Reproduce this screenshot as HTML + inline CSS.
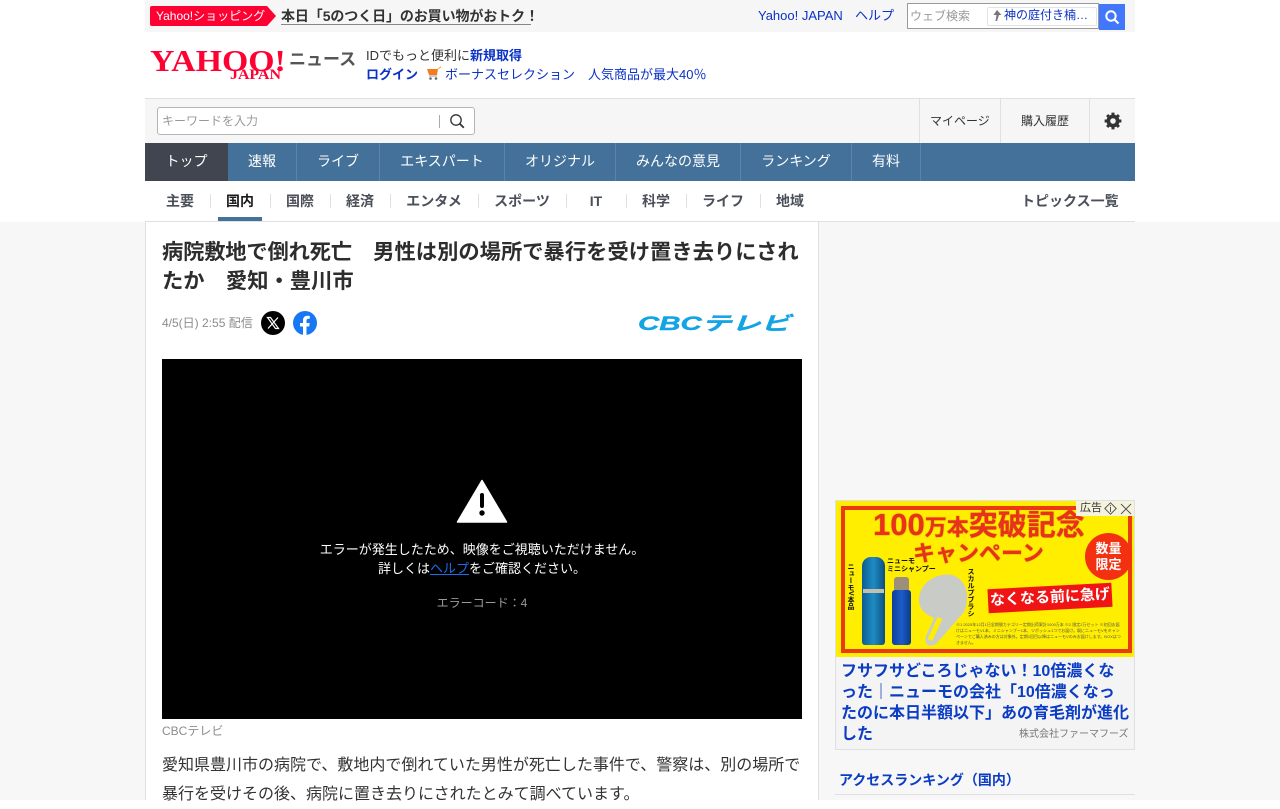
<!DOCTYPE html>
<html lang="ja"><head><meta charset="utf-8"><title>Yahoo!ニュース</title>
<style>
*{box-sizing:border-box}
html,body{margin:0;padding:0;width:1280px;height:800px;overflow:hidden;background:#fff;font-family:"Liberation Sans","Noto Sans CJK JP",sans-serif;color:#333}
.a{position:absolute;white-space:nowrap}
a,.l{color:#0b32c4;text-decoration:none}
.nav{position:absolute;top:143px;height:38px;line-height:37px;color:#fff;font-size:14px;text-align:center;border-right:1px solid #5b84a8;opacity:1}
.sub{position:absolute;top:193px;font-size:14px;font-weight:bold;color:#4a4f59;line-height:16px;text-align:center;width:60px}
.sep{position:absolute;top:194px;width:1px;height:14px;background:#e0e0e0}
</style></head><body>
<div class="a" style="left:0;top:222px;width:1280px;height:578px;background:#f7f7f7"></div>

<!-- top bar -->
<div class="a" style="left:145px;top:0;width:990px;height:32px;background:#f6f6f6"></div>
<svg class="a" style="left:150px;top:6px" width="127" height="20"><path d="M2 0H117L126 10L117 20H2Q0 20 0 18V2Q0 0 2 0Z" fill="#ff0033"/></svg>
<div class="a" style="left:156px;top:6px;height:20px;line-height:20px;font-size:12px;color:#fff">Yahoo!ショッピング</div>
<div class="a" style="left:281px;top:6px;height:19px;line-height:20px;font-size:14px;font-weight:bold;color:#333;border-bottom:1px solid #888;width:250px;letter-spacing:-.1px">本日「5のつく日」のお買い物がおトク！</div>
<div class="a l" style="left:758px;top:8px;font-size:13px;line-height:15px">Yahoo! JAPAN</div>
<div class="a l" style="left:855px;top:8px;font-size:13px;line-height:15px">ヘルプ</div>
<div class="a" style="left:907px;top:3px;width:192px;height:26px;background:#fff;border:1px solid #999"></div>
<div class="a" style="left:910px;top:9px;font-size:12px;line-height:14px;color:#999">ウェブ検索</div>
<div class="a" style="left:987px;top:7px;width:110px;height:19px;border:1px solid #e4e4e4;border-radius:2px;background:#fff"></div>
<svg class="a" style="left:992px;top:10px" width="10" height="12"><path d="M5 0L9.500 5H7L5 11H3.500L4.500 5H1.500Z" fill="#777"/></svg>
<div class="a l" style="left:1004px;top:8px;font-size:12px;line-height:15px">神の庭付き楠…</div>
<div class="a" style="left:1099px;top:4px;width:26px;height:26px;background:#4277fb"></div>
<svg class="a" style="left:1104px;top:9px" width="16" height="16" fill="none" stroke="#fff" stroke-width="2"><circle cx="7" cy="7" r="4.700"/><path d="M10.500 10.500L14.500 14.500"/></svg>

<!-- logo -->
<div class="a" style="left:150px;top:45px;font-family:'Liberation Serif',serif;font-weight:bold;font-size:31px;line-height:31px;color:#ff0033;transform-origin:0 0;transform:scaleX(1.09)">YAHOO!</div>
<div class="a" style="left:230px;top:68px;font-family:'Liberation Serif',serif;font-weight:bold;font-size:15px;line-height:15px;color:#ff0033;transform-origin:0 0;transform:scaleX(1.06)">JAPAN</div>
<div class="a" style="left:289px;top:49px;font-size:17px;font-weight:bold;line-height:22px;color:#555">ニュース</div>
<div class="a" style="left:366px;top:47px;font-size:13px;line-height:18px;color:#333">IDでもっと便利に<a style="font-weight:bold">新規取得</a></div>
<div class="a l" style="left:366px;top:66px;font-size:13px;line-height:18px;font-weight:bold">ログイン</div>
<svg class="a" style="left:426px;top:66px" width="17" height="15"><path d="M1 3H12L11 9H3Z" fill="#f47c20"/><path d="M3 10H11" stroke="#999" stroke-width="1"/><circle cx="4.500" cy="12.500" r="1.300" fill="#666"/><circle cx="10" cy="12.500" r="1.300" fill="#666"/><path d="M12 3L15 .8" stroke="#f5a623" stroke-width="1"/></svg>
<div class="a l" style="left:445px;top:66px;font-size:13px;line-height:18px">ボーナスセレクション</div>
<div class="a l" style="left:588px;top:66px;font-size:13px;line-height:18px">人気商品が最大40％</div>

<!-- search row -->
<div class="a" style="left:145px;top:98px;width:990px;height:45px;background:#f6f6f6;border-top:1px solid #e0e0e0"></div>
<div class="a" style="left:157px;top:107px;width:318px;height:28px;background:#fff;border:1px solid #b5b5b5;border-radius:3px"></div>
<div class="a" style="left:162px;top:113px;font-size:12px;line-height:16px;color:#999">キーワードを入力</div>
<div class="a" style="left:439px;top:115px;width:1px;height:13px;background:#aaa"></div>
<svg class="a" style="left:449px;top:113px" width="16" height="16" fill="none" stroke="#333" stroke-width="1.300"><circle cx="7" cy="7" r="5.200"/><path d="M10.800 10.800L14.800 14.800" stroke-width="1.800"/></svg>
<div class="a" style="left:919px;top:99px;width:1px;height:44px;background:#e0e0e0"></div>
<div class="a" style="left:1000px;top:99px;width:1px;height:44px;background:#e0e0e0"></div>
<div class="a" style="left:1089px;top:99px;width:1px;height:44px;background:#e0e0e0"></div>
<div class="a" style="left:930px;top:113px;font-size:12px;line-height:16px;color:#333">マイページ</div>
<div class="a" style="left:1021px;top:113px;font-size:12px;line-height:16px;color:#333">購入履歴</div>
<svg class="a" style="left:1104px;top:112px" width="18" height="18"><circle cx="9" cy="9" r="6.500" fill="#333"/><path d="M9 .6V17.400M.6 9H17.400M3.100 3.100L14.900 14.900M14.900 3.100L3.100 14.900" stroke="#333" stroke-width="3"/><circle cx="9" cy="9" r="2.800" fill="#f6f6f6"/></svg>

<!-- nav -->
<div class="a" style="left:145px;top:143px;width:990px;height:38px;background:#437199"></div>
<div class="nav" style="left:145px;width:83px;background:#40454f;border-right:0">トップ</div>
<div class="nav" style="left:228px;width:69px">速報</div>
<div class="nav" style="left:297px;width:83px">ライブ</div>
<div class="nav" style="left:380px;width:125px">エキスパート</div>
<div class="nav" style="left:505px;width:111px">オリジナル</div>
<div class="nav" style="left:616px;width:125px">みんなの意見</div>
<div class="nav" style="left:741px;width:111px">ランキング</div>
<div class="nav" style="left:852px;width:69px">有料</div>

<!-- sub nav -->
<div class="a" style="left:145px;top:221px;width:990px;height:1px;background:#e0e0e0"></div>
<div class="sub" style="left:150px">主要</div>
<div class="sub" style="left:210px;color:#1a1a1a">国内</div>
<div class="a" style="left:218px;top:217px;width:44px;height:4px;background:#437199"></div>
<div class="sub" style="left:270px">国際</div>
<div class="sub" style="left:330px">経済</div>
<div class="sub" style="left:390px;width:88px">エンタメ</div>
<div class="sub" style="left:478px;width:88px">スポーツ</div>
<div class="sub" style="left:566px">IT</div>
<div class="sub" style="left:626px">科学</div>
<div class="sub" style="left:686px;width:74px">ライフ</div>
<div class="sub" style="left:760px">地域</div>
<div class="sep" style="left:210px"></div><div class="sep" style="left:270px"></div><div class="sep" style="left:330px"></div><div class="sep" style="left:390px"></div><div class="sep" style="left:478px"></div><div class="sep" style="left:566px"></div><div class="sep" style="left:626px"></div><div class="sep" style="left:686px"></div><div class="sep" style="left:760px"></div>
<div class="a" style="left:1021px;top:193px;font-size:14px;font-weight:bold;line-height:16px;color:#4a4f59">トピックス一覧</div>

<!-- article -->
<div class="a" style="left:145px;top:222px;width:674px;height:578px;background:#fff;border-left:1px solid #e0e0e0;border-right:1px solid #e0e0e0"></div>
<div class="a" style="left:162px;top:238px;width:640px;white-space:normal;font-size:21.300px;line-height:29px;font-weight:bold;color:#2d2d2d"><span style="letter-spacing:-.2px">病院敷地で倒れ死亡</span>　男性は別の場所で暴行を受け置き去りにされたか　愛知・豊川市</div>
<div class="a" style="left:162px;top:315px;font-size:12px;line-height:16px;color:#8c8c8c">4/5(日) 2:55 配信</div>
<svg class="a" style="left:261px;top:311px" width="24" height="24"><circle cx="12" cy="12" r="12" fill="#000"/><path d="M6.500 6.500H9.500L17.500 17.500H14.500ZM17 6.500L7 17.500" fill="none" stroke="#fff" stroke-width="1.200"/></svg>
<svg class="a" style="left:293px;top:311px" width="24" height="24"><circle cx="12" cy="12" r="12" fill="#1877f2"/><path d="M10 24V15.500H7V12H10V9.300C10 6.300 11.800 4.700 14.500 4.700C15.800 4.700 16.800 4.900 16.800 4.900V7.800H15.300C13.900 7.800 13.500 8.700 13.500 9.600V12H16.700L16.200 15.500H13.500V24Z" fill="#fff"/></svg>
<div class="a" style="left:638px;top:314px;font-style:italic;font-weight:bold;font-size:19px;line-height:21px;color:#12a4e4;-webkit-text-stroke:.4px #12a4e4;transform-origin:0 0;transform:scaleX(1.55)">CBCテレビ</div>

<div class="a" style="left:162px;top:359px;width:640px;height:360px;background:#000"></div>
<svg class="a" style="left:456px;top:479px" width="52" height="44"><path d="M26 1.500L50.500 43H1.500Z" fill="#fff" stroke="#fff" stroke-linejoin="round" stroke-width="1.500"/><rect x="24" y="14" width="4" height="15" rx="2" fill="#000"/><circle cx="26" cy="34" r="2.700" fill="#000"/></svg>
<div class="a" style="left:162px;top:540px;width:640px;text-align:center;font-size:13px;line-height:19px;color:#fff">エラーが発生したため、映像をご視聴いただけません。<br>詳しくは<span style="color:#1a6ee8;text-decoration:underline">ヘルプ</span>をご確認ください。</div>
<div class="a" style="left:162px;top:595px;width:640px;text-align:center;font-size:12px;line-height:16px;color:#999">エラーコード：4</div>
<div class="a" style="left:162px;top:723px;font-size:12px;line-height:16px;color:#8c8c8c">CBCテレビ</div>
<div class="a" style="left:162px;top:751px;width:642px;white-space:normal;font-size:16px;line-height:29px;color:#333">愛知県豊川市の病院で、敷地内で倒れていた男性が死亡した事件で、警察は、別の場所で暴行を受けその後、病院に置き去りにされたとみて調べています。</div>

<!-- ad -->
<div class="a" style="left:835px;top:500px;width:300px;height:250px;background:#f4f4f4;border:1px solid #e0e0e0"></div>
<div class="a" style="left:836px;top:501px;width:298px;height:156px;background:#ffee00;overflow:hidden">
<div class="a" style="left:5px;top:5px;width:291px;height:147px;border:4px solid #ea3a12"></div>
<div class="a" style="left:37px;top:8px;font-size:31px;line-height:32px;font-weight:bold;color:#e8321a;text-shadow:0 0 1px #c22">100<span style="font-size:22px">万本</span><span style="font-size:29px">突破記念</span></div>
<div class="a" style="left:77px;top:40px;font-size:22px;line-height:26px;font-weight:bold;color:#e8321a;text-shadow:0 0 1px #c22">キャンペーン</div>
<div class="a" style="left:26px;top:56px;width:23px;height:88px;border-radius:9px 9px 3px 3px;background:linear-gradient(90deg,#0d5c8f,#1e8cc4 50%,#0d4f7e)"></div>
<div class="a" style="left:27px;top:88px;width:21px;height:4px;background:#c4c0b0"></div>
<div class="a" style="left:58px;top:76px;width:15px;height:15px;background:#9b8f7c;border-radius:3px"></div>
<div class="a" style="left:56px;top:89px;width:19px;height:55px;border-radius:3px;background:linear-gradient(90deg,#0d3f9a,#1c5cc8 50%,#0c3a8a)"></div>
<svg class="a" style="left:80px;top:71px" width="54" height="76"><path d="M3 28C3 10 22 0 36 3C52 8 54 26 48 40L20 72C12 76 8 72 10 64L18 46C8 42 3 36 3 28Z" fill="#c9cbc7"/><path d="M24 46L14 68" stroke="#ffee00" stroke-width="5"/></svg>
<div class="a" style="left:152px;top:85px;width:124px;height:24px;background:#f01414;transform:rotate(-3deg);color:#fff;font-size:15px;font-weight:bold;line-height:24px;text-align:center">なくなる前に急げ</div>
<div class="a" style="left:249px;top:32px;width:47px;height:47px;border-radius:50%;background:#f3300f;color:#fff;font-size:13px;font-weight:bold;line-height:16px;text-align:center;padding-top:8px">数量<br>限定</div>
<div class="a" style="left:10px;top:62px;font-size:7px;line-height:8px;font-weight:bold;color:#111;writing-mode:vertical-rl">ニューモV本品</div>
<div class="a" style="left:51px;top:57px;font-size:7px;line-height:8px;font-weight:bold;color:#111">ニューモ<br>ミニシャンプー</div>
<div class="a" style="left:130px;top:67px;font-size:7px;line-height:8px;font-weight:bold;color:#111;writing-mode:vertical-rl">スカルプブラシ</div>
<div class="a" style="left:120px;top:121px;width:167px;white-space:normal;font-size:4px;line-height:6px;color:#555">※1 2025年12月1日全期間カテゴリー定期出荷累計1000万本 ※2 限定2万セット ※初回お届けはニューモV1本、ミニシャンプー1本、ツボッシュ1つでお届け。既にニューモVをキャンペーンでご購入済みの方は対象外。定期2回目以降はニューモVのみお届けします。BOXはつきません。</div>
</div>
<div class="a" style="left:1076px;top:501px;width:58px;height:15px;background:#f6f3dd;font-size:11px;line-height:15px;color:#333;padding-left:4px">広告</div>
<svg class="a" style="left:1104px;top:502px" width="29" height="13" fill="none" stroke="#555"><path d="M6.500 .8L12.200 6.500L6.500 12.200L.8 6.500Z"/><path d="M6.500 5V10M6.500 3V4.200"/><path d="M17 2L27 12M27 2L17 12"/></svg>
<div class="a" style="left:841px;top:661px;width:289px;white-space:normal;font-size:16px;line-height:21px;font-weight:bold;color:#0b3cc4">フサフサどころじゃない！10倍濃くなった｜ニューモの会社「10倍濃くなったのに本日半額以下」あの育毛剤が進化した</div>
<div class="a" style="left:1019px;top:727px;font-size:10px;line-height:15px;color:#777">株式会社ファーマフーズ</div>

<div class="a" style="left:839px;top:771px;font-size:14px;line-height:18px;font-weight:bold;color:#0b3cc4">アクセスランキング（国内）</div>
<div class="a" style="left:835px;top:794px;width:300px;height:1px;background:#e0e0e0"></div>
</body></html>
